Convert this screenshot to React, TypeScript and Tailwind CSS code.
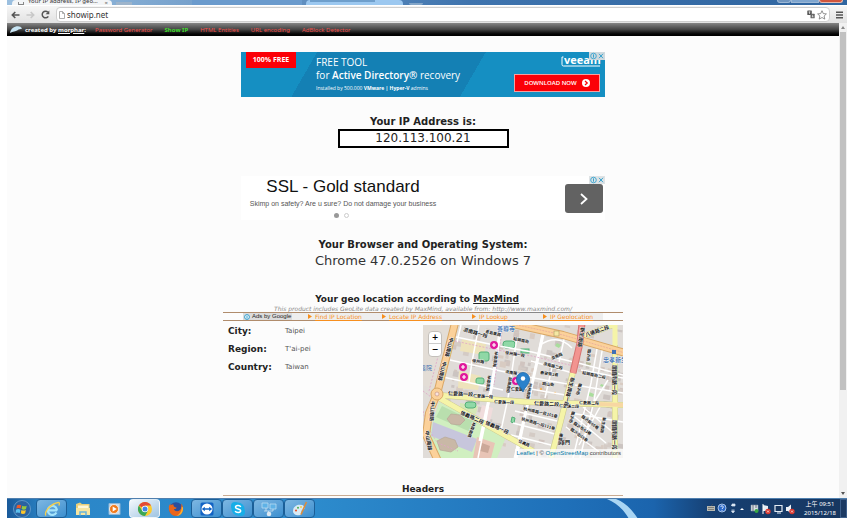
import React from "react";

const verdana = "font-['DejaVu_Sans',Verdana,sans-serif]";

/* ---------- browser chrome ---------- */

function TabStrip() {
  return (
    <div className="flex h-[5px] items-end overflow-hidden bg-linear-to-r from-[#9cc0e0] via-[#3f74ae] via-55% to-[#2f65a0]">
      <div className="ml-[5px] flex h-full w-[100px] items-end gap-1 overflow-hidden rounded-t-sm bg-[#f3f5f7] pl-[6px] pr-1">
        <span className="h-[3px] w-[6px] shrink-0 border border-t-0 border-[#888]" />
        <span className="h-[5px] min-w-0 flex-1 overflow-hidden whitespace-nowrap font-['Noto_Sans',sans-serif] text-[6px] leading-[3px] text-[#333]">
          Your IP address, IP geo…
        </span>
        <span className="text-[6px] leading-[3px] text-[#666]">×</span>
      </div>
      <div className="ml-1 h-[3px] w-[16px] bg-[#9db4cb]" />
      <div className="ml-[60px] h-full w-[110px] bg-[#6b9bcd]" />
      <div className="ml-1 h-full w-[97px] rounded-t-sm bg-[#9cc8f0] px-1">
        <div className="h-[2px] w-[65px] bg-[#6f9fcc]" />
      </div>
      <div className="ml-[6px] h-[2px] w-[14px] rounded-b bg-[#83a6c9]" />
      <div className="ml-auto mr-1 flex h-full items-start">
        <span className="h-[3px] w-[14px] rounded-b border border-t-0 border-[#9db8d6] bg-[#6f95bf]" />
        <span className="h-[3px] w-[28px] border border-t-0 border-[#9db8d6] bg-[#7fa6cf]" />
        <span className="h-[3px] w-[24px] rounded-b border border-t-0 border-[#e7b7ab] bg-[#d0553c]" />
      </div>
    </div>
  );
}

function Toolbar() {
  return (
    <div className="flex h-[18px] items-center gap-[6px] border-t border-white bg-linear-to-b from-[#f6f6f6] to-[#e2e2e2] px-1">
      <button aria-label="Back" className="flex">
        <svg width="9" height="8" viewBox="0 0 9 8" fill="none" stroke="#555" strokeWidth="1.6">
          <path d="M8.500 4H1.500M4.300 1L1.300 4l3 3" />
        </svg>
      </button>
      <button aria-label="Forward" className="flex">
        <svg width="9" height="8" viewBox="0 0 9 8" fill="none" stroke="#c8c8c8" strokeWidth="1.600">
          <path d="M0.500 4h7M4.700 1l3 3-3 3" />
        </svg>
      </button>
      <button aria-label="Reload" className="flex">
        <svg width="9" height="9" viewBox="0 0 9 9" fill="none" stroke="#555" strokeWidth="1.500">
          <path d="M7.300 6.300A3.300 3.300 0 1 1 6.900 2.200" />
          <path d="M8.300 0.500v3.700H4.600z" fill="#555" stroke="none" />
        </svg>
      </button>
      <div className="flex h-[15px] min-w-0 flex-1 items-center gap-[2px] rounded-sm border border-[#cfcfcf] bg-white px-[2px]">
        <svg width="6" height="8" viewBox="0 0 6 8" fill="#fff" stroke="#999" strokeWidth="0.800">
          <path d="M0.500 0.500h3l2 2v5h-5zM3.500 0.500v2h2" />
        </svg>
        <input
          aria-label="Address"
          defaultValue="showip.net"
          className="h-3 min-w-0 flex-1 bg-transparent font-['Noto_Sans',sans-serif] text-[8px] leading-3 text-[#333] outline-none"
        />
        <button aria-label="Translate this page" className="flex">
          <svg width="8" height="9" viewBox="0 0 8 9">
            <rect x="0.300" y="0.500" width="4.500" height="4.500" rx="0.500" fill="#555" />
            <rect x="3.500" y="3.700" width="4.200" height="4.600" rx="0.500" fill="#666" />
            <path d="M1.500 2h2M2.500 1.500v2.500M4.800 6.800h1.700M5.600 4.900v2" stroke="#fff" strokeWidth="0.600" />
          </svg>
        </button>
        <button aria-label="Bookmark this page" className="flex">
          <svg width="10" height="10" viewBox="0 0 10 10" fill="#fff" stroke="#777" strokeWidth="0.800">
            <path d="M5 0.700l1.300 2.900 3.100.3-2.300 2.100.7 3.100L5 7.500 2.200 9.100l.7-3.100L.6 3.900l3.100-.3z" />
          </svg>
        </button>
      </div>
      <button aria-label="Menu" className="flex">
        <svg width="7" height="8" viewBox="0 0 7 8" stroke="#555" strokeWidth="1.500">
          <path d="M0 1.200h7M0 4h7M0 6.800h7" />
        </svg>
      </button>
    </div>
  );
}

function Scrollbar() {
  return (
    <div className="flex w-2 shrink-0 flex-col items-center justify-between bg-[#f1f1f1] py-[3px]">
      <div className="flex flex-col items-center gap-[3px]">
        <svg width="4" height="3" viewBox="0 0 4 3">
          <path d="M2 0l2 3H0z" fill="#888" />
        </svg>
        <div className="h-[358px] w-[6px] bg-[#c1c1c1]" />
      </div>
      <svg width="4" height="3" viewBox="0 0 4 3">
        <path d="M0 0h4L2 3z" fill="#555" />
      </svg>
    </div>
  );
}

/* ---------- page ---------- */

function SiteHeader() {
  const links = ["Password Generator", "Show IP", "HTML Entities", "URL encoding", "AdBlock Detector"];
  return (
    <header className="flex h-[13px] items-center bg-linear-to-b from-[#858585] via-[#444] to-black px-[3px] font-['Noto_Sans',sans-serif] text-[6px] leading-[8px]">
      <svg width="12" height="7" viewBox="0 0 12 7">
        <path d="M0 7C1 2.500 4 .3 8 .3c1.800 0 3.200.8 4 2.400-2 .1-3 .5-4.500 1.500C5.500 5.500 3 5.200 0 7z" fill="#c9e6f5" />
      </svg>
      <span className="ml-[3px] w-[70px] whitespace-nowrap font-bold text-white">
        created by{" "}
        <a href="#morphar" className="underline">
          morphar
        </a>
        :
      </span>
      <nav className="flex gap-3 whitespace-nowrap">
        {links.map((l) => (
          <a key={l} href={"#" + l} className={l === "Show IP" ? "font-bold text-[#3fdc2c]" : "text-[#f0504c]"}>
            {l}
          </a>
        ))}
      </nav>
    </header>
  );
}

function AdChoices({ dark }: { dark?: boolean }) {
  return (
    <svg width="16" height="8" viewBox="0 0 16 8" className="absolute right-0 top-0">
      <rect width="16" height="8" fill={dark ? "#cfd9de" : "#dfe3e5"} />
      <circle cx="4.500" cy="4" r="2.800" fill="none" stroke="#38a4cf" strokeWidth="0.900" />
      <path d="M4.500 2.300v3.400M10 1.800l4 4.400M14 1.800l-4 4.400" stroke="#38a4cf" strokeWidth="1" />
    </svg>
  );
}

function VeeamBanner() {
  return (
    <section className="relative flex h-[45px] w-[364px] overflow-hidden bg-[linear-gradient(120deg,#158fc2_0_66px,#1480b4_66px_212px,#158fc2_212px)] font-['Open_Sans','Noto_Sans',sans-serif] text-white">
      <div className="ml-[5px] h-4 w-[50px] bg-[#fb0007] text-center text-[7px] font-bold leading-4">100% FREE</div>
      <div className="ml-[20px] flex-1 whitespace-nowrap pt-1">
        <p className="text-[10px] leading-[13px]">FREE TOOL</p>
        <p className="text-[10px] leading-[13px]">
          for <b className="font-semibold">Active Directory®</b> recovery
        </p>
        <p className="pt-[2px] text-[5px] leading-2">
          Installed by 500.000 <b>VMware | Hyper-V</b> admins
        </p>
      </div>
      <div className="flex flex-col items-end justify-between py-[5px] pr-[5px]">
        <svg width="39" height="10" viewBox="0 0 39 10" className="overflow-visible">
          <path d="M2.500 0H1v7.500q0 1.500 1.500 1.500H39" stroke="#fff" strokeWidth="1" fill="none" />
          <text x="3" y="7" fill="#fff" className="font-['Open_Sans',sans-serif] text-[11px] font-bold">
            veeam
          </text>
        </svg>
        <button className="flex h-[18px] w-[86px] items-center justify-center gap-[5px] whitespace-nowrap border border-[#f5a0a0] bg-[#fb0007] text-[6px] font-semibold">
          DOWNLOAD NOW
          <svg width="8" height="8" viewBox="0 0 8 8">
            <circle cx="4" cy="4" r="4" fill="#fff" />
            <path d="M3 2l2.200 2L3 6" stroke="#fb0007" strokeWidth="1.300" fill="none" />
          </svg>
        </button>
      </div>
      <AdChoices dark />
    </section>
  );
}

function SslAd() {
  return (
    <section className="relative flex h-11 w-[364px] justify-between bg-white font-['Liberation_Sans',Arial,sans-serif]">
      <div className="w-[204px] text-center">
        <h2 className="text-[17px] leading-[21px] text-[#111]">SSL - Gold standard</h2>
        <p className="whitespace-nowrap pt-[2px] text-[7px] leading-[10px] text-[#555]">
          Skimp on safety? Are u sure? Do not damage your business
        </p>
        <div className="flex justify-center gap-[5px] pr-1 pt-1">
          <span className="size-[5px] rounded-full bg-[#999]" />
          <span className="size-[5px] rounded-full border border-[#ccc]" />
        </div>
      </div>
      <button
        aria-label="Open ad"
        className="mr-[2px] mt-2 flex h-[29px] w-[38px] items-center justify-center rounded-[3px] bg-[#626262]"
      >
        <svg width="8" height="12" viewBox="0 0 8 12" fill="none" stroke="#fff" strokeWidth="1.800">
          <path d="M1 1l5.500 5L1 11" />
        </svg>
      </button>
      <AdChoices />
    </section>
  );
}

/* ---------- map ---------- */

type Label = [number, number, number, string, number?];

const labels: Label[] = [
  [40, 4, 16, "濟南路一段", 5],
  [74, 4, 0, "善導寺", 6],
  [62, 6, 12, "青島東路"],
  [90, 13, 12, "紹興南街"],
  [82, 27, 9, "徐州路一段"],
  [49, 35, 8, "徐州路"],
  [82, 46, 9, "濟南路"],
  [25, 68, 3, "仁愛路一段", 5],
  [50, 70, 4, "仁愛路一段"],
  [71, 76, 3, "仁愛路一段"],
  [37, 87, 24, "信義路二段", 5],
  [62, 97, 24, "信義路一段", 5],
  [88, 64, 0, "仁愛路"],
  [95, 115, 24, "信義路"],
  [163, 10, -20, "八德路二段", 5],
  [129, 33, -24, "濟南路"],
  [120, 38, 14, "濟南路二段"],
  [117, 47, 8, "泰安街2巷"],
  [119, 58, 6, "銅山街"],
  [159, 47, 12, "紹興南街二段"],
  [111, 78, 3, "仁愛路二段", 5],
  [136, 80, 3, "仁愛路二段"],
  [156, 77, 2, "仁愛路二段"],
  [100, 83, 13, "杭州南路一段101巷"],
  [98, 93, 17, "杭州南路一段111巷"],
  [158, 90, 38, "臨沂街60巷"],
  [150, 97, 34, "臨沂街63巷"],
  [147, 103, 36, "臨沂街65巷"],
  [137, 117, 0, "東門", 5],
  [180, 35, 0, "忠孝新生", 6],
];

const verticals: Label[] = [
  [27, 10, 104, "中山南路", 5],
  [20, 34, 104, "中山南路", 5],
  [8, 74, 94, "中山南路", 5],
  [2, 104, 80, "中山南路", 5],
  [72, 24, 97, "林森南路"],
  [65, 48, 97, "林森南路"],
  [50, 95, 110, "林森南路"],
  [86, 50, 100, "紹興南街"],
  [106, 56, 100, "杭州南路"],
  [158, 0, 100, "新生南路", 5],
  [148, 50, 104, "新生南路一段", 5],
  [165, 22, 97, "臨沂街"],
  [156, 56, 104, "臨沂街"],
  [149, 84, 104, "臨沂街"],
  [137, 106, 100, "連雲街"],
  [190, 38, 90, "建國南路一段", 5],
  [190, 93, 90, "建國南路一段", 5],
  [180, 90, 100, "新生南路"],
];

function rnd(i: number) {
  const x = Math.sin(i * 12.9898) * 43758.5453;
  return x - Math.floor(x);
}

const buildings = Array.from({ length: 200 }, (_, i) => ({
  x: 14 + rnd(i + 1) * 184,
  y: rnd(i + 500) * 128,
  w: 2 + rnd(i + 900) * 6,
  h: 2 + rnd(i + 1300) * 4,
  c: ["#d0c4bf", "#cbc4c1", "#d8cbc2", "#d4cbc5"][i % 4],
}));

function GeoMap() {
  return (
    <div className="relative h-[133px] w-[200px] shrink-0 overflow-hidden">
      <svg width="200" height="133" viewBox="0 0 200 133" role="img" aria-label="Map of Taipei">
        <rect width="200" height="133" fill="#e0dcd8" />
        {buildings.map((b, i) => (
          <rect key={i} x={b.x} y={b.y} width={b.w} height={b.h} fill={b.c} transform={`rotate(10 ${b.x} ${b.y})`} />
        ))}
        {/* land use */}
        <path d="M0 0h29L13 66 0 60z" fill="#e3ddd6" />
        <path d="M39 14l24 5-2 11-24-4zM36 46l22 5-3 14-20-2z" fill="#eee3bb" />
        <path d="M69 42l21 4-2 12 12 2 1 14-35-4z" fill="#dad8da" />
        <path d="M59 80l11 3-4 18-11-5z" fill="#f0dcdc" />
        <path d="M37 78l18 3-2 8-16-3z" fill="#d5e8b6" />
        {/* memorial park */}
        <path d="M16 77l44 22 24 11-10 23H10L5 112z" fill="#d0efc0" />
        <path d="M19 81l35 17-4 10-37-16z" fill="#b9dfae" />
        <path d="M10 97l44 17-5 13-41-16z" fill="#c7c6dc" />
        <path d="M28 89l9 1 5 5-5 5-9-1-4-5zM14 116l8-4 10 3 3 7-7 5-11-2z" fill="#c9b8a6" stroke="#b8a896" strokeWidth="0.700" />
        <path d="M54 112l18 6-4 15H50z" fill="#e8c4b6" />
        <path d="M59 118l8 3-2 7-8-2z" fill="#cba899" />
        {/* green pitches */}
        <g fill="#8fd8a6" stroke="#54b078" strokeWidth="1">
          <rect x="56" y="27" width="10" height="9" rx="2" />
          <rect x="80" y="16" width="12" height="7" rx="3" />
          <rect x="53" y="53" width="8" height="6" rx="2" />
          <rect x="42" y="77" width="11" height="6" rx="3" />
          <rect x="98" y="24" width="8" height="4" />
          <path d="M89 92l3 1-1 5-3-1z" />
        </g>
        <g fill="#a9dd9c">
          <path d="M134 18l4 2-2 3-4-2zM166 67l5 2-1 3-4-1zM178 59l3 1-1 2-3-1z" />
        </g>
        <path d="M163 37l5 1-1 4-4-1z" fill="#b6b99a" />
        <circle cx="118" cy="64" r="1.200" fill="#f3b45e" />
        <circle cx="132" cy="68" r="1.200" fill="#f3b45e" />
        {/* minor streets */}
        <g fill="none" stroke="#fff" strokeWidth="1.500">
          <path d="M33 12l43 9 33 6 50 12 41 11M27 35l60 13 20 3M20 52l60 13M38 0l-4 17M56 0l-7 37-3 20M79 0L69 60l-6 34-8 39" />
          <path d="M120 5l-14 68-12 60M108 36l45 13M105 52l45 8M102 63l46 8M92 86l42 10M90 98l42 11M88 110l40 10M142 10l-6 27M175 18l-7 40-18 75M180 20l-9 56-14 57M152 60l48 8M158 45l42 8M148 88l52 9M143 102l36 27M147 88l36 30M160 82l33 28M117 20q18-12 32 3M130 38l-8 35M185 55l-15 24M94 12L85 73 77 110M178 80l-22 40" />
        </g>
        <g fill="none" stroke="#fff" strokeWidth="3">
          <path d="M78 0l-9 60-12 56M120 10L106 73 92 133" />
        </g>
        <g fill="none" stroke="#e0a4c8" strokeWidth="0.800" strokeDasharray="2 1.500">
          <path d="M32 16l42 9 35 6 50 12M0 66l12 9M80 0l-9 60M0 86q5 20 15 32l20 8M18 20L6 66" />
        </g>
        {/* yellow roads */}
        <g fill="none" stroke="#c9c88e" strokeWidth="6">
          <path d="M14 70l90 7 96 3M16 73l94 53M150 47l-13 52-9 34M192 20v113M158 12l32-12" />
        </g>
        <g fill="none" stroke="#f5f4a8" strokeWidth="5">
          <path d="M14 70l90 7 96 3M16 73l94 53M150 47l-13 52-9 34M192 0v133M158 12l32-12" />
        </g>
        <path d="M174 79l26 1" stroke="#f7d7a2" strokeWidth="4" />
        {/* arterial roads */}
        <g fill="none" strokeLinejoin="round">
          <path d="M32-2L14 69 6 88 3 110l12 26M90-1l50 11 62 18" stroke="#d9a765" strokeWidth="8" />
          <path d="M32-2L14 69 6 88 3 110l12 26M90-1l50 11 62 18" stroke="#fbd19a" strokeWidth="6" />
          <path d="M90-1l50 11 62 18" stroke="#e7a99c" strokeWidth="0.800" strokeDasharray="2 1" />
          <path d="M159-2l-2 20-7 30" stroke="#d57471" strokeWidth="7" />
          <path d="M159-2l-2 20-7 30" stroke="#f29490" strokeWidth="5" />
        </g>
        <circle cx="14" cy="69" r="6" fill="#fbd19a" stroke="#d9a765" />
        <circle cx="14" cy="69" r="2" fill="#f7e3df" stroke="#c98" strokeWidth="0.700" />
        <rect x="131" y="6" width="5" height="5" fill="#f5e8a4" stroke="#9b8a55" strokeWidth="0.500" />
        <rect x="189" y="25" width="4" height="4" fill="#406fb5" />
        {/* street names */}
        {[...labels, ...verticals].map(([x, y, r, t, s], i) => (
          <text
            key={i}
            transform={`translate(${x} ${y + 2}) rotate(${r})`}
            fontSize={s ?? 4}
            fill={s === 6 ? "#4a77b5" : "#111"}
            stroke="#fff"
            strokeWidth="0.600"
            paintOrder="stroke"
            className="font-['Noto_Sans_CJK_TC',sans-serif] font-bold"
          >
            {t}
          </text>
        ))}
        <text x="-3" y="45" fontSize="6" fill="#4a77b5" className="font-['Noto_Sans_CJK_TC',sans-serif]">
          醫院
        </text>
        {/* hospitals */}
        {[
          [71, 20],
          [40, 42],
          [41, 52],
          [93, 56],
        ].map(([x, y]) => (
          <g key={x}>
            <circle cx={x} cy={y} r="4" fill="#e0189c" />
            <path d={`M${x - 2} ${y}h4M${x} ${y - 2}v4`} stroke="#fff" strokeWidth="1.200" />
          </g>
        ))}
        {/* pin */}
        <path d="M101 67l6-5-2-1z" fill="#888" opacity="0.500" />
        <path d="M100 67c-1.500-5-6.500-7.500-6.500-13a6.500 6.500 0 0 1 13 0c0 5.500-5 8-6.500 13z" fill="#2a81cb" stroke="#1f68a8" strokeWidth="0.800" />
        <circle cx="100" cy="53.500" r="2.200" fill="#fff" />
      </svg>
      <div className="absolute left-[5px] top-[6px] flex flex-col divide-y divide-[#ccc] rounded-sm border border-[#c4c0bb] bg-white text-[8px] font-bold text-black">
        <button aria-label="Zoom in" className="h-3 w-[12px] leading-3">
          +
        </button>
        <button aria-label="Zoom out" className="h-3 w-[12px] leading-3">
          −
        </button>
      </div>
      <div className="absolute bottom-0 right-0 whitespace-nowrap bg-white/70 px-[2px] font-['Liberation_Sans',Arial,sans-serif] text-[6px] leading-[9px] text-[#444]">
        <a href="#leaflet" className="text-[#0078a8]">
          Leaflet
        </a>{" "}
        | ©{" "}
        <a href="#osm" className="text-[#0078a8]">
          OpenStreetMap
        </a>{" "}
        contributors
      </div>
    </div>
  );
}

function GeoSection() {
  const adLinks = ["Find IP Location", "Locate IP Address", "IP Lookup", "IP Geolocation"];
  const rows = [
    ["City:", "Taipei"],
    ["Region:", "T'ai-pei"],
    ["Country:", "Taiwan"],
  ];
  return (
    <section className="w-full">
      <h2 className="pr-3 text-center text-[9px] font-bold leading-3">
        Your geo location according to{" "}
        <a href="#maxmind" className="underline">
          MaxMind
        </a>
      </h2>
      <p className="whitespace-nowrap text-center text-[6px] italic leading-[7px] text-[#888]">
        This product includes GeoLite data created by MaxMind, available from:{" "}
        <a href="#maxmind-site" className="underline">
          http://www.maxmind.com/
        </a>
      </p>
      <div className="border-y border-[#b08c6c] px-5">
        <div className="grid h-[7px] grid-cols-[65px_74px_90px_71px_1fr] items-center bg-[#eeeeee] text-[6px] leading-[7px]">
          <span className="flex h-[7px] items-center gap-[2px] justify-self-start whitespace-nowrap bg-[#dcdcdc] px-[1px] font-['Liberation_Sans',Arial,sans-serif] text-[#222]">
            <svg width="6" height="6" viewBox="0 0 6 6">
              <circle cx="3" cy="3" r="2.400" fill="#fff" stroke="#2f9ccc" />
              <path d="M3 1.700v2.800" stroke="#2f9ccc" />
            </svg>
            Ads by Google
          </span>
          {adLinks.map((l) => (
            <a key={l} href={"#" + l} className="flex items-center gap-[3px] whitespace-nowrap text-[#f78f1e]">
              <svg width="4" height="5" viewBox="0 0 4 5">
                <path d="M0 0l4 2.500L0 5z" fill="#f78f1e" />
              </svg>
              <span className="underline">{l}</span>
            </a>
          ))}
        </div>
      </div>
      <div className="flex items-start justify-between pt-1">
        <table className="ml-[5px] text-left">
          <tbody>
            {rows.map(([k, v]) => (
              <tr key={k} className="h-[18px] align-top">
                <th scope="row" className="w-[57px] p-0 pt-[1px] text-[9px] font-bold leading-[10px]">
                  {k}
                </th>
                <td className="p-0 pt-[1px] text-[7px] leading-[11px] text-[#555]">{v}</td>
              </tr>
            ))}
          </tbody>
        </table>
        <GeoMap />
      </div>
    </section>
  );
}

/* ---------- taskbar ---------- */

const icons: { name: string; open?: boolean; active?: boolean; art: React.ReactNode }[] = [
  {
    name: "Internet Explorer",
    open: true,
    art: (
      <>
        <path d="M13 9.300H4.800M12.400 11.500A4.500 4.500 0 1 1 12.800 8.500v1" fill="none" stroke="#a5e4fb" strokeWidth="2.200" />
        <path d="M2 14.500C-.5 11 7 2.500 14.500 1.500c1.500 0 1 2 .2 3" fill="none" stroke="#f5cf4e" strokeWidth="1.300" />
      </>
    ),
  },
  {
    name: "Explorer",
    art: (
      <>
        <path d="M1 3l4-1.500 2 1.500h7.500v10H1z" fill="#e8cf7a" />
        <path d="M3 4.500h10.500v5H3z" fill="#fdf7d9" />
        <path d="M1 7h14v7H1z" fill="#f6e5a0" />
        <path d="M5 14.500v-3.500h6v3.500" fill="none" stroke="#67b4dc" strokeWidth="1.500" />
      </>
    ),
  },
  {
    name: "Media Player",
    art: (
      <>
        <path d="M3 2.500h11v11H3z" fill="#c9dff0" stroke="#8fb6d6" />
        <circle cx="8" cy="8" r="4.500" fill="#f07a1c" stroke="#fff" strokeWidth="0.700" />
        <path d="M6.700 5.500L10.800 8l-4.100 2.500z" fill="#fff" />
      </>
    ),
  },
  {
    name: "Chrome",
    active: true,
    art: (
      <>
        <circle cx="8" cy="8" r="7" fill="#fbcb2f" />
        <path d="M8 8L1.900 4.500A7 7 0 0 1 14.100 4.500H8z" fill="#e34a37" />
        <path d="M1.900 4.500A7 7 0 0 0 8 15l3-5.300-6-.2z" fill="#3aa757" />
        <circle cx="8" cy="8" r="3.200" fill="#fff" />
        <circle cx="8" cy="8" r="2.500" fill="#4285e8" />
      </>
    ),
  },
  {
    name: "Firefox",
    art: (
      <>
        <circle cx="8" cy="8" r="6.800" fill="#2b4f9e" />
        <path d="M1 5C0 11 3.500 15 8 15c4.500 0 7.500-3.500 7-8.500-.3-2-1-3.200-2-4 .8 2.500.5 5-1 6.500-2 2-5.500 1.500-6-1 1.200.3 2.300-.3 2.700-1.300C6.500 6 5.300 5.200 5.500 3.600 4 3.500 3 4 2.500 4.500L2.300 2.500z" fill="#e8651c" />
        <path d="M15 6.500c.5 5-2.500 8.500-7 8.500 3.500-1.500 6-4.500 5.500-9.500z" fill="#f9b233" />
      </>
    ),
  },
  {
    name: "TeamViewer",
    open: true,
    art: (
      <>
        <rect x="1.500" y="1.500" width="13" height="13" rx="1.500" fill="#1263c4" />
        <circle cx="8" cy="8" r="5.500" fill="#fff" />
        <path d="M2.800 8l3-2.200v1.500h4.400V5.800l3 2.200-3 2.200V8.700H5.800v1.500z" fill="#1263c4" />
      </>
    ),
  },
  {
    name: "Skype",
    open: true,
    art: (
      <>
        <circle cx="5" cy="5" r="4" fill="#17aee8" />
        <circle cx="11" cy="11" r="4" fill="#17aee8" />
        <circle cx="8" cy="8" r="6.500" fill="#17aee8" />
        <path d="M10.800 5.800C9.800 4 5.500 4 5.500 6.200c0 2.300 5.200 1.200 5.200 3.600 0 2.200-4.500 2.300-5.600.2" fill="none" stroke="#fff" strokeWidth="1.500" />
      </>
    ),
  },
  {
    name: "Network",
    open: true,
    art: (
      <>
        <path d="M1 2h6v5H1zM9 3h6v5H9z" fill="#5fb2e6" stroke="#b9dcf2" strokeWidth="0.800" />
        <path d="M3 10h9M5 7v3M12 8v2M7.500 10v2" stroke="#cfe4f3" strokeWidth="0.800" />
        <circle cx="8" cy="13" r="2.300" fill="#dce9f2" />
      </>
    ),
  },
  {
    name: "Paint",
    open: true,
    art: (
      <>
        <path d="M1 10c0-4 3.500-6.500 7.500-6.200 3 .2 4.500 2 4 3.700-.5 1.500-3 1-3 2.500s1 2.500-1 3.700C6 15 1 14 1 10z" fill="#d7eaf5" />
        <circle cx="4" cy="9.500" r="1.100" fill="#e4572e" />
        <circle cx="6" cy="6.800" r="1" fill="#4caf50" />
        <circle cx="9" cy="6" r="0.900" fill="#f6c945" />
        <path d="M14.500 1L9 13.500" stroke="#dc8c3c" strokeWidth="1.600" />
      </>
    ),
  },
];

function Taskbar() {
  return (
    <footer className="flex h-5 items-center overflow-hidden border-t border-[#4f7fae] bg-[linear-gradient(90deg,#1a5a9a_0,#2b86c8_40px,#2d8ccd_300px,#1f70b9_560px,#1b64ad_77%,#163f72_84%,#17365f_100%)]">
      <button aria-label="Start" className="flex h-full w-[29px] items-center justify-center">
        <svg width="18" height="18" viewBox="0 0 18 18">
          <circle cx="9" cy="9" r="8.500" fill="#2a62a0" stroke="#6fa3cf" strokeWidth="0.800" />
          <path d="M4 5.300c1.500-.9 3-.8 4.300 0l-.6 3.300c-1.500-.8-3-.8-4.400 0z" fill="#ea5b2d" />
          <path d="M9.200 5.700c1.500.8 3 .8 4.500 0l-.7 3.400c-1.400.8-3 .8-4.400 0z" fill="#95c83d" />
          <path d="M3 9.700c1.500-.8 3-.8 4.400 0L6.800 13c-1.500-.8-2.800-.8-4.200 0z" fill="#5cc0ee" />
          <path d="M8.400 10c1.500.8 3 .8 4.400 0l-.6 3.300c-1.500.8-3 .8-4.400 0z" fill="#fcc62c" />
        </svg>
      </button>
      {icons.map((ic) => (
        <button
          key={ic.name}
          aria-label={ic.name}
          className={
            "flex h-full w-[31px] items-center justify-center rounded-sm border " +
            (ic.active
              ? "border-white/60 bg-linear-to-br from-[#f3f8fc] to-[#9fc4e2]"
              : ic.open
                ? "border-[#1b5f98] bg-linear-to-br from-[#7db7e2] to-[#3a8fcf]"
                : "border-transparent")
          }
        >
          <svg width="16" height="16" viewBox="0 0 16 16">
            {ic.art}
          </svg>
        </button>
      ))}
      <svg width="34" height="20" viewBox="0 0 34 20" className="ml-auto mr-[67px]">
        <path d="M2 0C12 4 19 11 24 20h9C27 10 19 3 11 0z" fill="#a9d5f3" />
      </svg>
      <svg width="90" height="16" viewBox="0 0 90 16" className="mr-2">
        <rect x="1" y="5" width="8" height="5" fill="#b9b9b0" />
        <path d="M2 6.500h6M2 8.500h6M5 5l2-2" stroke="#555" strokeWidth="0.600" />
        <circle cx="16" cy="7" r="4" fill="#2a68c8" stroke="#c9dcf2" strokeWidth="0.800" />
        <path d="M14.700 6c.2-1.600 2.700-1.500 2.600.1 0 1-1.300 1-1.300 2M16 9v.8" stroke="#fff" strokeWidth="0.900" fill="none" />
        <path d="M26 3h3v2h-3zM25 5l2-2M25.500 9h3M27 12l-1.500-2h3z" fill="#dbe7f3" stroke="#dbe7f3" strokeWidth="0.700" />
        <path d="M34 9h4l-2-2z" fill="#fff" />
        <path d="M45 4h7v6h-7z" fill="#d9e1e6" stroke="#8b9aa8" strokeWidth="0.500" />
        <path d="M47 4v6M50 4v3" stroke="#556" strokeWidth="0.800" />
        <circle cx="50.500" cy="10" r="2" fill="#3aa845" />
        <path d="M57 4l5 1v5h-5z" fill="#e8eef4" />
        <path d="M57 3v10" stroke="#fff" />
        <circle cx="62" cy="10.500" r="2.700" fill="#d9352c" />
        <path d="M61 9.500l2 2M63 9.500l-2 2" stroke="#fff" strokeWidth="0.700" />
        <path d="M69 4.500h7v6h-7z" fill="#17365f" stroke="#e3ebf3" strokeWidth="1.200" />
        <path d="M71 12h4" stroke="#e3ebf3" />
        <path d="M80 6h2l3-2.500v9L82 10h-2z" fill="#eef3f8" />
        <circle cx="86" cy="10.500" r="2.700" fill="#d9352c" />
        <path d="M85 9.500l2 2M87 9.500l-2 2" stroke="#fff" strokeWidth="0.700" />
      </svg>
      <time className="mr-1 whitespace-nowrap text-center font-['Noto_Sans','Noto_Sans_CJK_TC',sans-serif] text-[6px] leading-[9px] text-white">
        上午 09:51
        <br />
        2015/12/18
      </time>
      <button aria-label="Show desktop" className="h-full w-[7px] border border-[#3d5f8b] bg-[#1c3a63]" />
    </footer>
  );
}

export default function App() {
  return (
    <div className="bg-white pb-[7px] pl-[7px] pr-[6px]">
      <TabStrip />
      <Toolbar />
      <div className="flex bg-[#fcfcfc]">
        <div className="min-w-0 flex-1">
          <SiteHeader />
          <main className={"mx-auto flex max-w-[400px] flex-col items-center pt-4 text-[#222] " + verdana}>
            <VeeamBanner />
            <h2 className="mt-[19px] text-[10px] font-bold leading-3">Your IP Address is:</h2>
            <p className="mt-[1px] w-[171px] border-2 border-black bg-white text-center text-[12px] leading-[15px]">
              120.113.100.21
            </p>
            <div className="pt-7">
              <SslAd />
            </div>
            <h2 className="mt-[19px] text-[10px] font-bold leading-3">Your Browser and Operating System:</h2>
            <p className="mb-6 mt-[2px] text-[13px] leading-4 text-[#333]">Chrome 47.0.2526 on Windows 7</p>
            <GeoSection />
            <section className="w-full pb-[2px] pt-[26px]">
              <h2 className="border-b border-[#c9ab92] text-center text-[9px] font-bold leading-[11px]">Headers</h2>
            </section>
          </main>
        </div>
        <Scrollbar />
      </div>
      <Taskbar />
    </div>
  );
}
